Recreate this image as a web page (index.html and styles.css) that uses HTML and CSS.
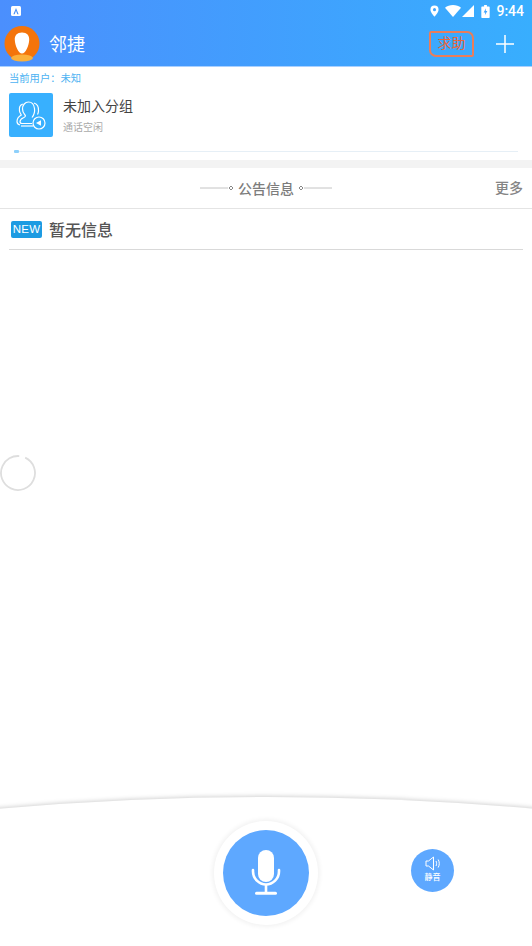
FILE: index.html
```html
<!DOCTYPE html>
<html lang="zh">
<head>
  <meta charset="UTF-8" />
  <meta name="viewport" content="width=device-width, initial-scale=1.0"/>
  <title>邻捷</title>
  <link rel="stylesheet" href="styles.css">
</head>
<body>

<div class="page">
  <header class="top">
    <div class="status">
      <svg width="10" height="10" viewBox="0 0 10 10"><rect width="10" height="10" rx="1.500" fill="#fff"/><path d="M2.400 8.200 5 2 7.600 8.200H6.300L5 4.800 3.700 8.200z" fill="#4a90f5"/></svg>
      <div class="status-right">
        <svg width="9" height="12" viewBox="0 0 10 13"><path d="M5 .5A4.500 4.500 0 0 0 .5 5C.5 8.200 5 12.800 5 12.800S9.500 8.200 9.500 5A4.500 4.500 0 0 0 5 .5z" fill="#fff"/><circle cx="5" cy="5" r="1.700" fill="#3fa4ff"/></svg>
        <svg class="wifi" width="16" height="12" viewBox="0 0 16 12"><path d="M0 2.800C2 1 5 0 8 0s6 1 8 2.800L8 12z" fill="#fff"/></svg>
        <svg class="signal" width="12" height="12" viewBox="0 0 12 12"><path d="M12 0v12H0z" fill="#fff"/></svg>
        <svg width="9" height="13" viewBox="0 0 9 14"><path d="M3 0h3v1.500h2.200a.8.8 0 0 1 .8.8V13.200a.8.8 0 0 1-.8.8H.8a.8.8 0 0 1-.8-.8V2.300a.8.8 0 0 1 .8-.8H3z" fill="#fff"/><path d="M5 3.500 2.500 8H4.200L3.800 11 6.500 6.500H4.800z" fill="#3fa4ff"/></svg>
        <span class="clock">9:44</span>
      </div>
    </div>
    <div class="toolbar">
      <svg class="avatar" width="36" height="36" viewBox="0 0 36 36">
        <circle cx="18" cy="17.500" r="17.500" fill="#f4740b"/>
        <ellipse cx="18" cy="32" rx="11" ry="3.500" fill="#fbb03b"/>
        <path d="M18 6.500c5 0 7.500 3 7.200 7.500-.3 5.500-3.500 13.500-7.200 13.500S11.100 19.500 10.800 14c-.3-4.500 2.200-7.500 7.200-7.500z" fill="#fff"/>
      </svg>
      <span class="app-name">邻捷</span>
      <span class="help">求助</span>
      <svg class="plus" width="20" height="20" viewBox="0 0 20 20"><path d="M10 1v18M1 10h18" stroke="#fff" stroke-width="1.500" fill="none"/></svg>
    </div>
  </header>

  <section class="user">
    <div class="user-label">当前用户：未知</div>
    <div class="group">
      <div class="group-icon">
        <svg width="30" height="30" viewBox="0 0 30 30" fill="none" stroke="#fff" stroke-width="1.200">
          <path d="M16 17.500C18 15 19 12 18.500 8.500 18 4.500 15.500 2 12.500 2 9 2 6.500 5 6.500 9c0 2.500 1 4.500 2.500 6 1 1 0 2.200-1.500 2.800-2 .8-3.500 2-3.500 4 0 1 .7 1.700 2 1.700h10"/>
          <path d="M6.800 4C4 5 3 8 3.500 11c.3 1.800 1.200 3 1.800 4C3.500 16 1 18 1 21.500c0 1.500 1 3 3 3.500"/>
          <path d="M18 3c3 1 4.800 4 4.500 8-.1 1.300-.5 2.500-1 3.500"/>
          <path d="M5 26h12"/>
          <circle cx="23" cy="23" r="6"/>
          <path d="M20 23 25 20.200v5.600z" fill="#fff" stroke="none"/>
        </svg>
      </div>
      <div class="group-text">
        <div class="group-name">未加入分组</div>
        <div class="group-state">通话空闲</div>
      </div>
    </div>
    <div class="progress"><span class="progress-dot"></span></div>
  </section>

  <div class="divider"></div>

  <section class="notice-head">
    <div class="notice-title">
      <svg width="34" height="8" viewBox="0 0 34 8"><path d="M0 4H28" stroke="#c4c4c4" stroke-width="1"/><path d="M31 2 33 4 31 6 29 4z" fill="none" stroke="#888" stroke-width="1"/></svg>
      <span>公告信息</span>
      <svg width="34" height="8" viewBox="0 0 34 8"><path d="M6 4H34" stroke="#c4c4c4" stroke-width="1"/><path d="M3 2 5 4 3 6 1 4z" fill="none" stroke="#888" stroke-width="1"/></svg>
    </div>
    <span class="more">更多</span>
  </section>

  <section class="notice-row">
    <span class="new-tag">NEW</span>
    <span class="notice-text">暂无信息</span>
  </section>

  <main class="content"></main>

  <footer class="bottom">
    <svg class="curve" width="532" height="18" viewBox="0 0 532 18">
      <path d="M-10 15.500Q266-9.500 542 15.500V200H-10z" fill="#fff"/>
    </svg>
    <div class="mic-ring">
      <div class="mic">
        <svg class="mic-icon" width="30" height="46" viewBox="0 0 30 46" fill="none">
          <rect x="7" y="1" width="16" height="32" rx="8" fill="#fff"/>
          <path d="M2 21v1.500C2 29.500 8 35.500 15 35.500S28 29.500 28 22.500V21" stroke="#fff" stroke-width="2.600" stroke-linecap="round"/>
          <path d="M15 35.500V44" stroke="#fff" stroke-width="2.600"/>
          <path d="M5.500 44.300h19" stroke="#fff" stroke-width="3" stroke-linecap="round"/>
        </svg>
      </div>
    </div>
    <div class="mute">
      <svg width="16" height="15" viewBox="0 0 16 15" fill="none" stroke="#fff" stroke-width="1">
        <path d="M1 5v5h2.500L8.500 14V1L3.500 5z"/>
        <path d="M11 5c.8 1.500.8 3.500 0 5M13.200 3.500c1.400 2.500 1.400 5.500 0 8"/>
      </svg>
      <span>静音</span>
    </div>
  </footer>

  <svg class="spinner" width="36" height="36" viewBox="0 0 36 36">
    <circle cx="18" cy="18" r="17" fill="none" stroke="#dedede" stroke-width="1.800" stroke-dasharray="100 6.800" transform="rotate(-65 18 18)"/>
  </svg>
</div>

</body>
</html>
```

FILE: styles.css
```css
* { box-sizing: border-box; }
body {
  margin: 0;
  background: #fff;
  font-family: "Roboto", "Noto Sans CJK SC", sans-serif;
}
.page {
  position: relative;
  width: 532px;
  height: 946px;
  display: flex;
  flex-direction: column;
  overflow: hidden;
}

.top {
  height: 67px;
  background: linear-gradient(90deg, #4b8ffd, #38aefe);
  border-bottom: 1px solid #a9d0ff;
  color: #fff;
}
.status {
  height: 24px;
  display: flex;
  justify-content: space-between;
  align-items: center;
  padding: 0 8px 2px 11px;
}
.status-right {
  display: flex;
  align-items: center;
  gap: 6px;
}
.wifi { margin-right: -5px; }
.signal { margin-right: 1px; }
.clock { font-size: 14px; font-weight: 500; }
.toolbar {
  height: 42px;
  display: flex;
  align-items: center;
  padding: 0 17px 0 4px;
}
.avatar { margin-top: -2px; }
.app-name { font-size: 18px; margin-left: 9px; margin-top: -4px; flex: 1; }
.help {
  width: 45px;
  height: 26px;
  border: 2px solid #ea7d5a;
  border-radius: 2px 7px 2px 7px;
  color: #e8663c;
  font-size: 14px;
  line-height: 21px;
  text-align: center;
  margin-right: 21px;
  margin-top: -3px;
}
.plus { margin-top: -3px; }

.user { height: 93px; padding: 4px 14px 0 9px; }
.user-label {
  font-family: "Roboto", "Noto Sans CJK TC", sans-serif;
  font-size: 10.300px;
  line-height: 15px;
  color: #4db3f2;
}
.group {
  display: flex;
  align-items: center;
  margin-top: 7px;
}
.group-icon {
  width: 44px;
  height: 44px;
  background: #38b0fe;
  border-radius: 2px;
  display: flex;
  align-items: center;
  justify-content: center;
}
.group-text { margin-left: 10px; }
.group-name { font-size: 14px; line-height: 20px; color: #444; }
.group-state { font-size: 10px; line-height: 14px; color: #aaa; margin-top: 5px; }
.progress {
  position: relative;
  height: 1px;
  margin: 14px 0 0 5px;
  background: #e6eff6;
}
.progress-dot {
  position: absolute;
  left: 0;
  top: -1px;
  width: 5px;
  height: 3px;
  border-radius: 1px;
  background: #8ed0fb;
}

.divider { height: 8px; background: #f3f3f3; }

.notice-head {
  position: relative;
  height: 41px;
  border-bottom: 1px solid #e4e4e4;
  display: flex;
  align-items: center;
  justify-content: center;
}
.notice-title {
  display: flex;
  align-items: center;
  gap: 4px;
  font-size: 14px;
  font-weight: 500;
  color: #7d7d7d;
}
.more {
  position: absolute;
  right: 9px;
  top: 12px;
  font-size: 14px;
  font-weight: 500;
  line-height: 17px;
  color: #858585;
}

.notice-row {
  height: 41px;
  margin: 0 9px;
  padding-left: 2px;
  border-bottom: 1px solid #d9d9d9;
  display: flex;
  align-items: center;
}
.new-tag {
  width: 31px;
  height: 17px;
  border-radius: 2px;
  background: #1d9be2;
  color: #fff;
  font-family: "Liberation Sans", sans-serif;
  font-size: 11.500px;
  letter-spacing: 0.3px;
  line-height: 17px;
  text-align: center;
}
.notice-text {
  margin-left: 7px;
  font-size: 16px;
  font-weight: 500;
  color: #555;
}

.content { flex: 1; }

.bottom {
  position: relative;
  height: 150px;
  display: flex;
  justify-content: center;
}
.curve {
  position: absolute;
  left: 0;
  top: -2px;
  overflow: visible;
  filter: drop-shadow(0 -1px 2px rgba(0,0,0,0.18));
}
.mic-ring {
  position: relative;
  width: 104px;
  height: 104px;
  margin-top: 25px;
  border-radius: 50%;
  background: #fff;
  box-shadow: 0 0 4px 2px rgba(0,0,0,0.05);
  display: flex;
  align-items: center;
  justify-content: center;
}
.mic {
  width: 86px;
  height: 86px;
  border-radius: 50%;
  background: #5ea8ff;
  display: flex;
  align-items: center;
  justify-content: center;
}
.mic-icon { margin-top: -2px; }
.mute {
  position: absolute;
  left: 411px;
  top: 53px;
  width: 43px;
  height: 43px;
  border-radius: 50%;
  background: #5ea8ff;
  color: #fff;
  display: flex;
  flex-direction: column;
  align-items: center;
  padding-top: 7px;
}
.mute span { font-size: 8px; line-height: 10px; margin-top: 2px; font-weight: 500; }

.spinner {
  position: absolute;
  left: 0;
  top: 455px;
}
```
